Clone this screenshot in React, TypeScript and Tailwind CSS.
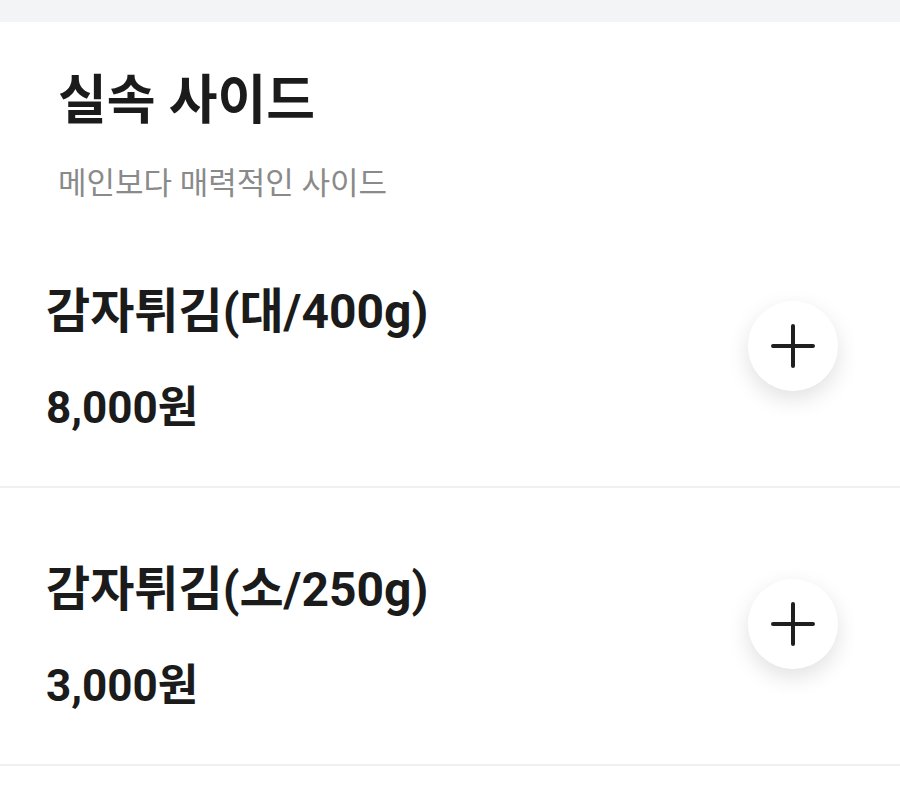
import React from "react";

const font = { fontFamily: 'Roboto, "Noto Sans CJK KR", sans-serif' };

function PlusButton() {
  return (
    <div className="w-[90px] h-[90px] rounded-full bg-white flex items-center justify-center mb-[4px] shadow-[0_8px_22px_rgba(0,0,0,0.12)]">
      <svg width="44" height="44" viewBox="0 0 44 44">
        <path d="M22 2V42M2 22H42" stroke="#1f1f1f" strokeWidth="4" strokeLinecap="round" />
      </svg>
    </div>
  );
}

function Item({ name, price }: { name: string; price: string }) {
  return (
    <div className="flex items-center justify-between pl-[46px] pr-[62px] border-b-2 border-[#f0f0f0]">
      <div className="flex flex-col pt-[74px] pb-[52px]">
        <div className="text-[48px] font-bold text-[#1b1b1b] leading-[56px] whitespace-nowrap">{name}</div>
        <div className="text-[44px] font-bold text-[#1b1b1b] leading-[52px] mt-[42px] whitespace-nowrap">{price}</div>
      </div>
      <PlusButton />
    </div>
  );
}

export default function App() {
  return (
    <div className="w-[900px] h-[789px] bg-white overflow-hidden" style={font}>
      <div className="h-[22px] bg-[#f3f4f6]" />
      <div className="pl-[58px] pt-[47px]">
        <div className="text-[53px] font-bold text-[#1b1b1b] leading-[64px] whitespace-nowrap">실속 사이드</div>
        <div className="text-[31px] text-[#8a8a8a] leading-[40px] mt-[31px] whitespace-nowrap">메인보다 매력적인 사이드</div>
      </div>
      <div className="flex flex-col mt-[6px]">
        <Item name="감자튀김(대/400g)" price="8,000원" />
        <Item name="감자튀김(소/250g)" price="3,000원" />
      </div>
    </div>
  );
}
